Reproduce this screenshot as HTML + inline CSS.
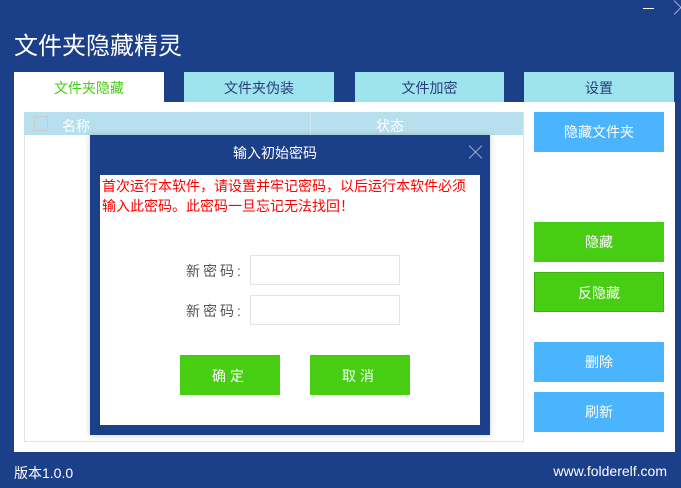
<!DOCTYPE html>
<html><head><meta charset="utf-8"><style>
*{margin:0;padding:0;box-sizing:border-box}
body{width:681px;height:488px;background:#1c3f8a;position:relative;overflow:hidden;font-family:"Liberation Sans","Noto Sans CJK SC",sans-serif}
.a{position:absolute}
.tab{position:absolute;top:72px;height:30px;background:#9de4ef;color:#2a3d7a;font-size:14px;text-align:center;line-height:32px}
.btn{position:absolute;left:534px;width:130px;height:40px;color:#fff;font-size:14px;text-align:center;line-height:40px}
.blue{background:#4ab4ff}.green{background:#47cd12}
</style></head><body>
<div class="a" style="left:14px;top:26px;color:#fff;font-size:24px">文件夹隐藏精灵</div>
<div class="a" style="left:643px;top:8px;width:11px;height:1px;background:#fff"></div>
<div class="a" style="left:674px;top:-2px;color:#fff;font-size:14px">╳</div>
<div class="tab" style="left:14px;width:150px;background:#fff;color:#47cd12">文件夹隐藏</div>
<div class="tab" style="left:184px;width:150px">文件夹伪装</div>
<div class="tab" style="left:355px;width:149px">文件加密</div>
<div class="tab" style="left:524px;width:150px">设置</div>
<div class="a" style="left:14px;top:102px;width:661px;height:350px;background:#fff"></div>
<div class="a" style="left:24px;top:112px;width:500px;height:330px;border:1px solid #e2e2e2"></div>
<div class="a" style="left:24px;top:112px;width:499px;height:23px;background:#b8dfed"></div>
<div class="a" style="left:34px;top:116px;width:14px;height:15px;border:1px solid #ccc"></div>
<div class="a" style="left:62px;top:116px;color:#fff;font-size:14px">名称</div>
<div class="a" style="left:310px;top:112px;width:1px;height:23px;background:#d0e8f0"></div>
<div class="a" style="left:376px;top:116px;color:#fff;font-size:14px">状态</div>
<div class="btn blue" style="top:112px">隐藏文件夹</div>
<div class="btn green" style="top:222px">隐藏</div>
<div class="btn green" style="top:272px;border:1px solid #3fb010">反隐藏</div>
<div class="btn blue" style="top:342px">删除</div>
<div class="btn blue" style="top:392px">刷新</div>
<div class="a" style="left:90px;top:135px;width:400px;height:300px;background:#1c3f8a;box-shadow:0 0 6px rgba(0,0,0,.2)"></div>
<div class="a" style="left:233px;top:143px;color:#fff;font-size:14px">输入初始密码</div>
<div class="a" style="left:469px;top:142px;color:#fff;font-size:13px">╳</div>
<div class="a" style="left:100px;top:175px;width:380px;height:250px;background:#fff"></div>
<div class="a" style="left:102px;top:176px;width:370px;color:#f00;font-size:14px;line-height:20px">首次运行本软件，请设置并牢记密码，以后运行本软件必须输入此密码。此密码一旦忘记无法找回！</div>
<div class="a" style="left:186px;top:261px;color:#555;font-size:14px;letter-spacing:3px">新密码:</div>
<div class="a" style="left:186px;top:301px;color:#555;font-size:14px;letter-spacing:3px">新密码:</div>
<div class="a" style="left:250px;top:255px;width:150px;height:30px;border:1px solid #e4e4e4"></div>
<div class="a" style="left:250px;top:295px;width:150px;height:30px;border:1px solid #e4e4e4"></div>
<div class="a green" style="left:180px;top:355px;width:100px;height:40px;color:#fff;font-size:14px;text-align:center;line-height:42px;letter-spacing:4px">确定</div>
<div class="a green" style="left:310px;top:355px;width:100px;height:40px;color:#fff;font-size:14px;text-align:center;line-height:42px;letter-spacing:4px">取消</div>
<div class="a" style="left:14px;top:463px;color:#fff;font-size:14px">版本1.0.0</div>
<div class="a" style="right:14px;top:463px;color:#fff;font-size:14px">www.folderelf.com</div>
</body></html>
